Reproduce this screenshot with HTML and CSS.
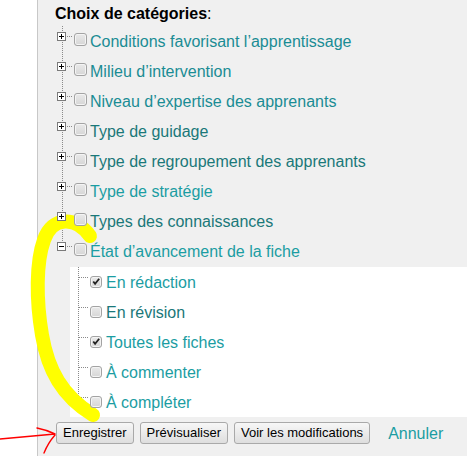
FILE: index.html
```html
<!DOCTYPE html>
<html lang="fr">
<head>
<meta charset="utf-8">
<title>Choix de catégories</title>
<link rel="stylesheet" href="styles.css">
</head>
<body>
<div class="page">
  <div class="gutter"></div>
  <div class="panel">
    <h2 class="title">Choix de catégories<span class="colon">:</span></h2>
    <ul class="tree">
      <li class="node">
        <div class="row"><span class="exp"><svg width="9" height="9" viewBox="0 0 9 9"><rect x=".5" y=".5" width="8" height="8" fill="#fff" stroke="#7a7a7a"/><path d="M2 4.5H7M4.5 2V7" stroke="#000"/></svg></span><span class="cb"></span><a class="lbl mid">Conditions favorisant l’apprentissage</a></div>
      </li>
      <li class="node">
        <div class="row"><span class="exp"><svg width="9" height="9" viewBox="0 0 9 9"><rect x=".5" y=".5" width="8" height="8" fill="#fff" stroke="#7a7a7a"/><path d="M2 4.5H7M4.5 2V7" stroke="#000"/></svg></span><span class="cb"></span><a class="lbl mid">Milieu d’intervention</a></div>
      </li>
      <li class="node">
        <div class="row"><span class="exp"><svg width="9" height="9" viewBox="0 0 9 9"><rect x=".5" y=".5" width="8" height="8" fill="#fff" stroke="#7a7a7a"/><path d="M2 4.5H7M4.5 2V7" stroke="#000"/></svg></span><span class="cb"></span><a class="lbl mid">Niveau d’expertise des apprenants</a></div>
      </li>
      <li class="node">
        <div class="row"><span class="exp"><svg width="9" height="9" viewBox="0 0 9 9"><rect x=".5" y=".5" width="8" height="8" fill="#fff" stroke="#7a7a7a"/><path d="M2 4.5H7M4.5 2V7" stroke="#000"/></svg></span><span class="cb"></span><a class="lbl dark">Type de guidage</a></div>
      </li>
      <li class="node">
        <div class="row"><span class="exp"><svg width="9" height="9" viewBox="0 0 9 9"><rect x=".5" y=".5" width="8" height="8" fill="#fff" stroke="#7a7a7a"/><path d="M2 4.5H7M4.5 2V7" stroke="#000"/></svg></span><span class="cb"></span><a class="lbl dark">Type de regroupement des apprenants</a></div>
      </li>
      <li class="node">
        <div class="row"><span class="exp"><svg width="9" height="9" viewBox="0 0 9 9"><rect x=".5" y=".5" width="8" height="8" fill="#fff" stroke="#7a7a7a"/><path d="M2 4.5H7M4.5 2V7" stroke="#000"/></svg></span><span class="cb"></span><a class="lbl light">Type de stratégie</a></div>
      </li>
      <li class="node">
        <div class="row"><span class="exp"><svg width="9" height="9" viewBox="0 0 9 9"><rect x=".5" y=".5" width="8" height="8" fill="#fff" stroke="#7a7a7a"/><path d="M2 4.5H7M4.5 2V7" stroke="#000"/></svg></span><span class="cb"></span><a class="lbl dark">Types des connaissances</a></div>
      </li>
      <li class="node last">
        <div class="row"><span class="exp"><svg width="9" height="9" viewBox="0 0 9 9"><rect x=".5" y=".5" width="8" height="8" fill="#fff" stroke="#7a7a7a"/><path d="M2 4.5H7" stroke="#000"/></svg></span><span class="cb"></span><a class="lbl light">État d’avancement de la fiche</a></div>
        <ul class="children">
          <li class="leaf"><span class="cb checked"><svg width="11" height="11" viewBox="0 0 11 11"><path d="M2.5 5.5L4.5 8L9 2.5" fill="none" stroke="#222" stroke-width="2"/></svg></span><a class="lbl light">En rédaction</a></li>
          <li class="leaf"><span class="cb"></span><a class="lbl dark">En révision</a></li>
          <li class="leaf"><span class="cb checked"><svg width="11" height="11" viewBox="0 0 11 11"><path d="M2.5 5.5L4.5 8L9 2.5" fill="none" stroke="#222" stroke-width="2"/></svg></span><a class="lbl light">Toutes les fiches</a></li>
          <li class="leaf"><span class="cb"></span><a class="lbl light">À commenter</a></li>
          <li class="leaf lastleaf"><span class="cb"></span><a class="lbl light">À compléter</a></li>
        </ul>
      </li>
    </ul>
    <div class="actions">
      <button class="btn">Enregistrer</button>
      <button class="btn">Prévisualiser</button>
      <button class="btn">Voir les modifications</button>
      <a class="cancel">Annuler</a>
    </div>
  </div>
</div>
<svg class="marks" width="467" height="456" viewBox="0 0 467 456">
  <path d="M90 236 C76 216 52 216 44 240 C36 262 36 300 42 335 C48 370 62 396 93 415" fill="none" stroke="#ffff00" stroke-width="14" stroke-linecap="round"/>
  <path d="M0 439 L55 434 M37 428 Q47 430 55 434 M55 435 Q48 443 44 453" fill="none" stroke="#ff0000" stroke-width="1.4" stroke-linecap="round"/>
</svg>
</body>
</html>
```
FILE: styles.css
```css
html, body {
  margin: 0;
  padding: 0;
  background: #ffffff;
}

body {
  font-family: "Liberation Sans", Arial, sans-serif;
  position: relative;
  width: 467px;
  height: 456px;
  overflow: hidden;
}

.page {
  display: flex;
  min-height: 456px;
}

.gutter {
  width: 37px;
  flex: none;
  background: #ffffff;
}

.panel {
  flex: 1;
  background: #f0f0f0;
  border-left: 1px solid #c8c8c8;
  min-height: 456px;
}

.title {
  margin: 0 0 3px 0;
  padding: 4px 0 0 17px;
  font-size: 16px;
  line-height: 19px;
  font-weight: bold;
  color: #000;
}

.colon {
  font-weight: normal;
}

.tree {
  list-style: none;
  margin: 0;
  padding: 0 0 0 19px;
}

.node {
  background:
    repeating-linear-gradient(to bottom, #8a8a8a 0 1px, transparent 1px 2px) 5px 0 / 1px 100% no-repeat,
    repeating-linear-gradient(to right, #8a8a8a 0 1px, transparent 1px 2px) 10px 10px / 5px 1px no-repeat;
}

.node.last {
  background:
    repeating-linear-gradient(to bottom, #8a8a8a 0 1px, transparent 1px 2px) 5px 0 / 1px 10px no-repeat,
    repeating-linear-gradient(to right, #8a8a8a 0 1px, transparent 1px 2px) 10px 10px / 5px 1px no-repeat;
}

.row {
  display: flex;
  align-items: center;
  height: 30px;
}

.exp {
  position: relative;
  z-index: 2;
  display: block;
  width: 9px;
  height: 9px;
  margin-bottom: 10px;
  margin-right: 8px;
  flex: none;
}

.exp svg {
  display: block;
}

.cb {
  position: relative;
  z-index: 2;
  box-sizing: border-box;
  width: 13px;
  height: 13px;
  flex: none;
  border: 1px solid #a3a3a3;
  border-radius: 3px;
  background: linear-gradient(#e9e9e9, #d6d6d6);
  box-shadow: inset 0 0 0 1px #f4f4f4;
  margin-bottom: 4px;
  margin-right: 3px;
  display: flex;
  align-items: center;
  justify-content: center;
}

.cb svg {
  display: block;
}

.lbl {
  font-size: 16px;
  line-height: 19px;
  white-space: nowrap;
  text-decoration: none;
  cursor: pointer;
}

.light { color: #1b9da2; }
.mid { color: #1a8c94; }
.dark { color: #1a7879; }

.children {
  list-style: none;
  margin: 1px 0 0 13px;
  padding: 0 0 0 20px;
  background: #ffffff;
}

.leaf {
  display: flex;
  align-items: center;
  height: 30px;
  margin-left: -20px;
  padding-left: 20px;
  background:
    repeating-linear-gradient(to bottom, #8a8a8a 0 1px, transparent 1px 2px) 8px 0 / 1px 100% no-repeat,
    repeating-linear-gradient(to right, #8a8a8a 0 1px, transparent 1px 2px) 9px 10px / 10px 1px no-repeat;
}

.leaf.lastleaf {
  background:
    repeating-linear-gradient(to bottom, #8a8a8a 0 1px, transparent 1px 2px) 8px 0 / 1px 10px no-repeat,
    repeating-linear-gradient(to right, #8a8a8a 0 1px, transparent 1px 2px) 9px 10px / 10px 1px no-repeat;
}

.leaf .cb {
  width: 12px;
  height: 12px;
  margin-bottom: 1px;
  margin-right: 4px;
}

.actions {
  display: flex;
  align-items: center;
  gap: 6px;
  padding: 5px 0 0 18px;
}

.btn {
  font-family: "Liberation Sans", Arial, sans-serif;
  font-size: 13px;
  color: #000;
  height: 22px;
  padding: 0 6px;
  border: 1px solid #a9a9a9;
  border-radius: 3px;
  background: linear-gradient(#f7f7f7, #dedede);
  line-height: 20px;
}

.cancel {
  margin-left: 12px;
  font-size: 16px;
  line-height: 19px;
  color: #1b9da2;
  cursor: pointer;
}

.marks {
  position: absolute;
  left: 0;
  top: 0;
  z-index: 1;
  pointer-events: none;
}
```
